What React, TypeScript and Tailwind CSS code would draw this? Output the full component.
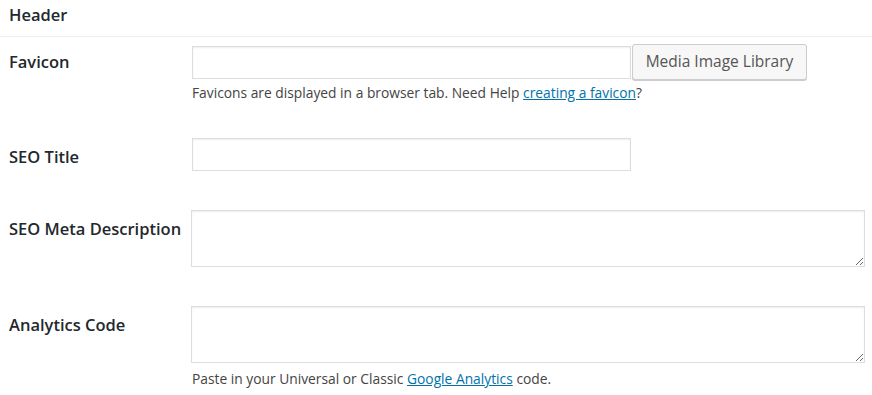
export default function App() {
  const label = "w-[192px] shrink-0 pl-[9px] text-[16.5px] font-semibold text-[#23282d]";
  const input =
    "h-[33px] w-[439px] border border-[#dddddd] bg-white px-2 shadow-[inset_0_1px_2px_rgba(0,0,0,0.07)] outline-none";
  const area =
    "h-[57px] w-[674px] border border-[#dddddd] bg-white px-2 shadow-[inset_0_1px_2px_rgba(0,0,0,0.07)] outline-none resize-y";

  return (
    <div className="min-h-screen w-[872px] bg-white font-['Open_Sans',sans-serif] text-[#444]">
      {/* Section header */}
      <div className="h-[37px] border-b border-[#eeeeee] pl-[9px] pt-[3px] text-[16.5px] font-semibold text-[#23282d]">
        Header
      </div>

      {/* Favicon */}
      <div className="mt-[7px] flex">
        <div className={label + " pt-[6px]"}>Favicon</div>
        <div className="flex flex-col">
          <div className="flex items-center">
            <input className={input} />
            <button className="ml-[1px] h-[36px] w-[175px] rounded-[3px] border border-[#cccccc] bg-[#f7f7f7] text-[15.5px] text-[#555] shadow-[0_1px_0_#cccccc]">
              Media Image Library
            </button>
          </div>
          <p className="mt-[3px] text-[13.8px] leading-[20px]">
            Favicons are displayed in a browser tab. Need Help{" "}
            <a href="#" className="text-[#0073aa] underline">
              creating a favicon
            </a>
            ?
          </p>
        </div>
      </div>

      {/* SEO Title */}
      <div className="mt-[35px] flex">
        <div className={label + " pt-[7px]"}>SEO Title</div>
        <input className={input} />
      </div>

      {/* SEO Meta Description */}
      <div className="mt-[39px] flex">
        <div className={label + " pt-[7px]"}>SEO Meta Description</div>
        <textarea className={area + " -ml-[1px]"} />
      </div>

      {/* Analytics Code */}
      <div className="mt-[39px] flex">
        <div className={label + " pt-[7px]"}>Analytics Code</div>
        <div className="-ml-[1px] flex flex-col">
          <textarea className={area} />
          <p className="mt-[6px] pl-[1px] text-[13.8px] leading-[20px]">
            Paste in your Universal or Classic{" "}
            <a href="#" className="text-[#0073aa] underline">
              Google Analytics
            </a>{" "}
            code.
          </p>
        </div>
      </div>
    </div>
  );
}
